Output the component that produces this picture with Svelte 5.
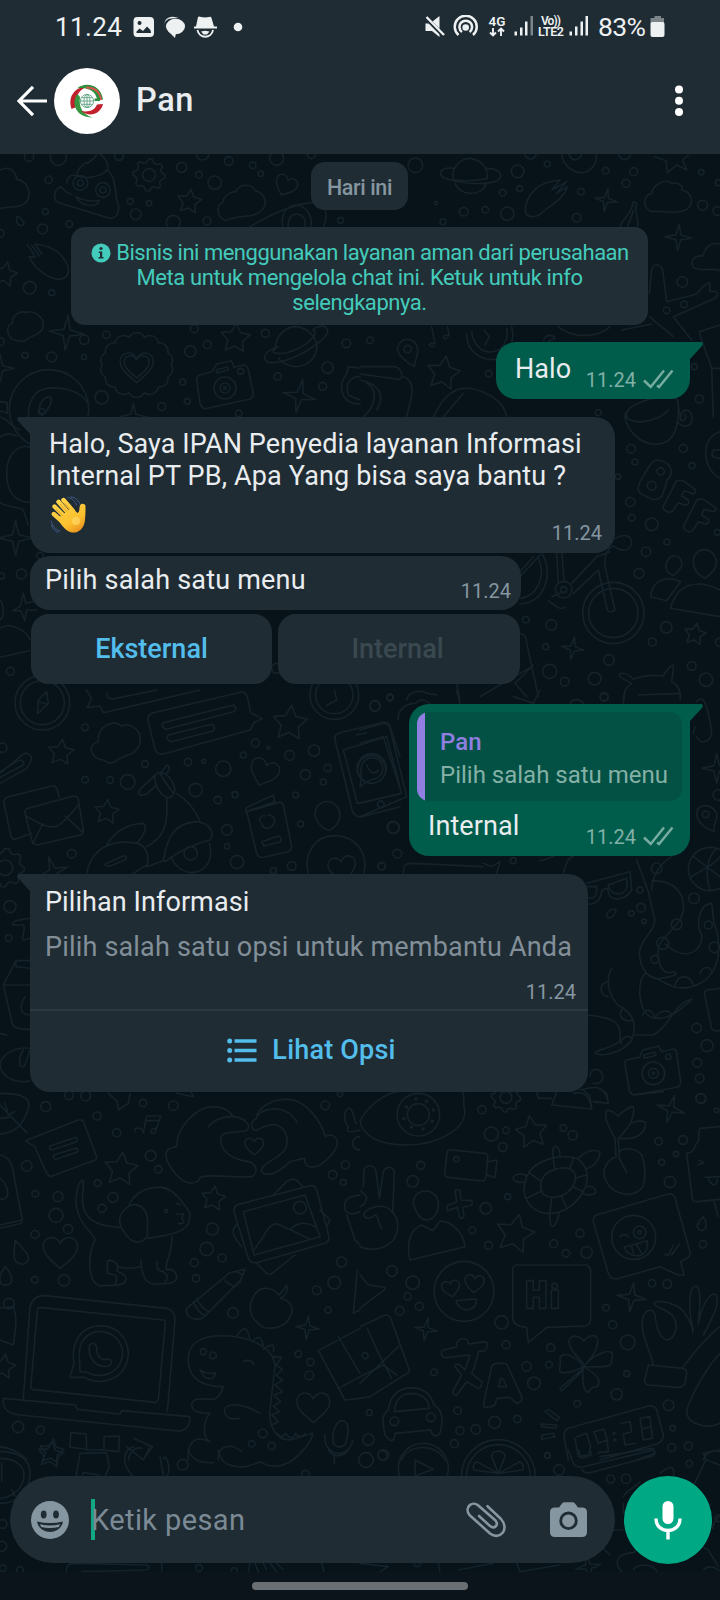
<script>
  const star = (x, y, r, a = 0) => {
    let d = '';
    for (let i = 0; i < 10; i++) {
      const q = i % 2 ? r * 0.5 : r;
      const t = ((a + i * 36 - 90) * Math.PI) / 180;
      d += (i ? 'L' : 'M') + (x + q * Math.cos(t)).toFixed(1) + ' ' + (y + q * Math.sin(t)).toFixed(1);
    }
    return d + 'Z';
  };
  const spark = (x, y, r, a = 0) => {
    let d = '';
    for (let i = 0; i <= 8; i++) {
      const q = i % 2 ? r * 0.26 : r;
      const t = ((a + i * 45 - 90) * Math.PI) / 180;
      d += (i ? 'L' : 'M') + (x + q * Math.cos(t)).toFixed(1) + ' ' + (y + q * Math.sin(t)).toFixed(1);
    }
    return d + 'Z';
  };
  const wavy = (x, y, rx, ry, n, k) => {
    let d = '';
    for (let i = 0; i <= n; i++) {
      const t = (i * 2 * Math.PI) / n;
      const px = (x + rx * Math.cos(t)).toFixed(1);
      const py = (y + ry * Math.sin(t)).toFixed(1);
      d += i ? `A${k} ${k} 0 0 1 ${px} ${py}` : `M${px} ${py}`;
    }
    return d + 'Z';
  };
  const ring = (x, y, r) => `M${x - r} ${y}a${r} ${r} 0 1 0 ${2 * r} 0a${r} ${r} 0 1 0 ${-2 * r} 0Z`;
  const heart = (x, y, s, a = 0) => {
    const c = Math.cos((a * Math.PI) / 180) * s;
    const n = Math.sin((a * Math.PI) / 180) * s;
    const p = (u, v) => `${(x + u * c - v * n).toFixed(1)} ${(y + u * n + v * c).toFixed(1)}`;
    return `M${p(0, -0.5)}C${p(0.3, -1.1)} ${p(1.2, -0.9)} ${p(1, -0.1)}C${p(0.85, 0.4)} ${p(0.3, 0.7)} ${p(0, 1)}C${p(-0.3, 0.7)} ${p(-0.85, 0.4)} ${p(-1, -0.1)}C${p(-1.2, -0.9)} ${p(-0.3, -1.1)} ${p(0, -0.5)}Z`;
  };
  const gear = (x, y, r) => {
    let d = '';
    for (let i = 0; i < 32; i++) {
      const q = i % 4 < 2 ? r : r * 0.8;
      const t = (i * Math.PI) / 16;
      d += (i ? 'L' : 'M') + (x + q * Math.cos(t)).toFixed(1) + ' ' + (y + q * Math.sin(t)).toFixed(1);
    }
    return d + 'Z' + ring(x, y, r * 0.4);
  };

  const tiles = [
    {
      x: 0, y: 150,
      dots: [[87,20,14],[175,22,24],[357,18,13],[146,89,11],[136,185,9],[208,222,10],[128,237,15],[89,413,19],[155,428,9],[391,154,9],[447,160,8],[407,193,16],[545,52,15],[597,74,10],[644,98,20],[686,33,13],[758,46,10],[782,71,8],[830,25,21],[520,217,21],[621,213,12],[608,12,18],[934,14,12],[1022,211,9],[0,250,12],[0,575,12],[75,616,9],[155,621,15],[252,621,8],[253,569,14],[319,554,11],[583,536,12],[622,584,12],[571,604,17],[796,550,12],[1039,580,13],[983,653,17],[833,679,11],[968,709,12],[548,696,9],[562,754,9],[485,770,12],[305,742,20],[716,790,10],[722,664,9]],
      paths: [
        'M0 60C20 48 48 58 50 88C80 90 96 130 82 152C65 178 30 166 0 176',
        'M182 110C160 120 155 155 182 160L325 204C350 210 365 180 350 150M182 110C190 118 200 128 212 132M200 100C200 80 215 72 232 78C228 50 270 30 262 40C275 28 292 22 290 8C310 12 328 40 322 60C345 80 345 110 350 150M232 78C255 88 300 82 322 60M228 140C240 170 290 175 298 152C270 155 245 150 228 140Z',
        ring(241,99,22), ring(309,120,22), ring(241,99,9), ring(309,120,9), gear(447,75,48),
        star(568,155,38,8), heart(857,106,32,25),
        'M680 212C650 205 645 165 668 158C672 130 700 125 708 125C720 95 760 105 765 122C800 130 802 165 785 180C760 210 715 190 680 212Z',
        'M750 230C820 190 880 160 960 155C985 180 980 210 970 230M848 230C840 180 870 165 892 165C920 170 940 200 932 230M865 230C862 205 875 192 892 192C910 195 918 210 915 230',
        'M52 198C60 205 78 215 70 225C55 232 45 215 52 198Z',
        'M82 285C92 295 100 308 105 322L88 320C100 350 140 385 175 388C205 388 212 360 200 340C180 300 140 285 105 282L125 312M95 285L118 318',
        star(15,373,38,12), spark(200,548,52,5), star(706,565,46,5), spark(0,655,42), spark(898,738,50,12), spark(400,800,40),
        'M45 570C20 565 15 525 38 520C35 495 60 480 80 488C100 478 130 500 130 525C125 560 90 555 75 572C65 575 55 574 45 570Z',
        wavy(410,645,104,85,14,26), heart(410,650,48), heart(410,648,36),
        ring(147,778,119), 'M85 810C82 730 120 710 170 714C215 716 245 735 262 755M120 790C110 765 135 735 152 742C160 755 145 775 135 790ZM0 755L22 758V790L0 782',
        'M600 675L636 665L650 642L694 632L702 652L730 645Q742 645 745 660L760 730Q760 745 748 748L615 776Q604 774 600 760L590 690Q590 678 600 675ZM648 660L682 651L685 660L651 669Z', ring(675,714,33), ring(675,714,15), ring(675,714,4),
        'M825 595C830 550 860 530 890 530C930 535 955 570 950 600C940 640 900 660 865 645C850 640 840 632 835 625M835 590C800 600 785 620 800 635C850 655 990 570 983 540C975 520 950 530 938 540C970 550 890 615 835 610C815 610 815 602 828 595',
        'M1080 655L1045 650L1040 672C1015 700 1020 750 1060 760L1080 762M1080 680C1050 680 1035 700 1045 735L1080 750'
      ]
    },
    {
      x: 360, y: 150,
      dots: [[166,46,22],[473,64,19],[428,128,10],[479,116,9],[512,10,17],[562,42,9],[737,62,10],[821,65,12],[798,100,12],[663,125,10],[311,185,13],[376,179,10],[442,191,20],[650,203,13],[249,215,9],[228,160,5],[1028,166,15],[1072,183,13],[1024,67,8],[967,396,16],[920,481,10],[972,463,10],[30,571,10],[386,671,10],[1018,747,12],[794,10,18],[1075,98,9],[1003,650,9]],
      paths: [
        'M278 75C282 40 310 25 330 25C360 28 385 50 382 85M278 75C278 85 283 95 290 90C320 95 365 90 382 85M280 55C240 50 230 75 255 85C310 105 390 105 415 90C435 70 410 55 382 55M285 100C300 140 365 140 378 102',
        'M500 195C485 160 520 105 570 95L600 90L575 120L620 95L590 130L622 110C610 150 570 165 545 188C530 205 508 200 500 195Z',
        spark(738,150,34,10), 'M605 10C610 55 650 75 680 65C705 52 712 30 708 10M625 10C640 45 665 25 665 10', 'M885 20L918 32L922 68L950 45L980 60L968 30L985 15',
        'M875 185C850 175 845 140 875 130C880 100 920 85 935 100C960 95 970 110 965 120C995 125 1005 160 980 178C950 195 910 180 875 185Z',
        'M780 230C790 200 815 195 820 155L830 160C820 190 840 205 832 230M805 230C800 220 815 210 820 180',
        spark(955,262,40,3), 'M1080 282C1050 275 1035 295 1028 318C1000 315 985 340 1005 355C1030 365 1055 352 1080 362',
        'M868 430L875 360C880 340 900 340 908 360L920 455L1010 432C1030 405 1050 395 1050 400L1048 425C1070 420 1080 430 1065 445L940 500L995 570M868 500L940 560M785 540L875 522',
        'M320 550C318 600 360 635 410 628C450 618 465 570 455 530M335 545C340 590 370 610 400 605C435 600 445 560 440 535M372 540L388 560L375 585M388 555',
        'M215 530L225 582C205 575 200 590 222 590M262 530L268 558C245 550 245 570 262 565',
        'M112 600C115 570 140 560 162 575C185 600 165 625 163 650C145 640 120 625 112 600Z', ring(143,597,11),
        star(250,670,52,10), 'M0 650L105 650C130 655 130 690 115 688L0 672M0 690C50 700 80 730 50 780M130 680C160 690 160 720 150 760L140 800M20 700C60 720 40 780 10 800',
        'M220 800C250 740 280 710 330 715C380 725 430 750 440 800M250 800L310 730M595 530C640 570 720 560 750 530',
        'M1018 545L1080 525M1018 550L1055 655L1060 800M1055 655H1080M550 570C560 550 580 555 585 565L565 575', 'M800 800C790 770 860 740 940 740C960 750 955 770 955 800'
      ]
    },
    {
      x: 0, y: 410,
      dots: [[5,498,9],[64,492,15],[31,784,12],[125,5,10],[120,437,10],[830,775,15]],
      paths: [
        'M0 80C20 70 35 70 50 78M90 112C50 100 18 140 20 195C22 250 50 275 90 278M0 278C30 295 60 290 70 300L85 345M0 20C30 30 30 50 60 60',
        spark(47,384,52,0), 'M70 550L78 580L110 572M110 600L80 600L75 632L62 602L38 602L60 590L70 550', 'M0 570C15 590 12 620 0 630', 'M0 655C30 635 80 660 90 690M0 742L88 722'
      ]
    },
    {
      x: 360, y: 410,
      dots: [[813,116,13],[825,156,9],[970,115,12],[996,167,9],[811,276,14],[815,323,10],[875,343,19],[921,396,9],[858,425,14],[837,490,15],[497,629,10],[574,645,16],[557,710,9],[569,784,21],[614,815,13],[747,750,16],[704,806,19],[919,652,17],[877,696,12],[995,768,13],[1038,809,20],[774,200,8],[715,8,9],[90,862,9],[733,862,12],[1072,367,9],[1078,697,12]],
      paths: [
        'M795 20C800 60 840 100 880 102C920 105 950 90 958 0M795 10C800 50 890 40 925 0M955 40C990 65 1005 30 990 5C970 -5 960 5 962 30C975 35 980 25 975 12',
        'M840 215L870 165Q885 145 905 152Q940 165 932 195Q930 205 920 210Q918 230 905 260Q885 275 870 265L842 250Q828 240 840 215Z', ring(902,184,11), ring(875,227,13),
        'M912 285L948 215Q955 208 968 212L1002 235Q1012 245 1000 252L972 242L965 258L985 270Q990 285 975 285L955 278L940 300Q930 312 918 303Q905 295 912 285Z',
        'M972 345L1008 275Q1015 262 1030 268L1062 290Q1075 298 1062 305L1032 298L1025 315L1045 328Q1050 342 1035 342L1015 335L1000 360Q990 370 978 362Q968 355 972 345Z',
        'M1080 65C1025 80 1020 170 1080 205M1080 120L1060 120C1050 135 1060 145 1080 145',
        ring(760,609,92), ring(760,609,74), 'M765 385C790 370 815 375 815 400C810 425 780 425 765 410C750 405 730 430 735 470L765 600Q750 612 742 600L715 480L640 550M590 430L595 520M606 430L612 515M710 440L635 520M750 425L710 440M565 572C590 590 600 600 615 592M575 560L610 545', ring(611,539,25), ring(611,539,9),
        'M545 430C580 480 560 580 480 582M535 445C560 500 530 560 480 565M480 500L540 435M480 485L520 440',
        'M918 465C925 430 955 430 965 455C970 480 945 490 940 497C925 490 915 480 918 465Z', 'M1000 450C1005 410 1060 405 1070 455C1068 490 1040 500 1033 505C1015 495 998 480 1000 450Z',
        'M872 560C875 510 920 495 962 515L920 572ZM932 595C950 520 1010 505 1080 540M932 595L1080 620', star(1005,673,34,10), spark(638,715,34,10),
        'M480 670C495 672 500 685 500 700L535 860M360 860L515 770M465 820L520 765M465 820L500 860M290 820L300 870M140 870C145 840 190 840 200 850L230 855',
        'M790 870C790 850 800 830 815 820L778 800C775 785 800 785 820 808C850 795 890 795 910 798C925 770 945 755 940 775L935 815C955 825 965 850 960 870'
      ]
    },
    {
      x: 0, y: 690,
      dots: [[255,112,10],[7,173,14],[255,269,10],[330,270,10],[383,276,22],[435,222,10],[564,216,11],[611,214,6],[730,195,9],[766,159,12],[805,173,5],[670,236,23],[587,300,20],[653,330,11],[705,314,9],[869,196,15],[942,182,17],[916,254,15],[983,234,11],[970,276,9],[887,315,9],[1125,48,15],[1170,23,10],[1180,413,17],[902,402,9],[681,420,16],[681,469,8],[711,516,20],[215,491,13],[820,542,9],[875,528,13],[1145,528,11],[30,650,18],[26,744,10],[1143,343,10]],
      paths: [
        ring(127,38,82), ring(127,38,66), 'M112 72L115 30L140 5L145 40ZM115 35L142 42', 'M258 0L275 25L262 52L300 48L310 68L600 0M320 10C320 25 330 30 350 25L470 0',
        'M445 95Q440 75 460 68L715 8Q735 2 742 20L752 68L786 86L762 98L750 120L490 192Q470 195 465 178ZM490 98L700 45Q715 55 700 65L500 118Q480 112 490 98ZM505 135L635 103Q650 110 640 122L515 155Q495 150 505 135Z',
        star(870,100,54,5), ring(1003,15,73), ring(1003,15,56), 'M1003 0L1010 30L980 46', star(183,188,40,6), star(320,366,38,5),
        'M310 210C270 205 260 165 295 155C290 110 340 85 365 108C400 95 430 130 418 165C405 200 365 195 345 215C335 222 320 218 310 210Z',
        'M0 250L60 200C80 180 100 195 92 215L80 235L0 280M0 245L50 215C65 205 75 215 70 225L0 262', heart(792,246,42,20),
        'M95 430L45 448Q35 448 32 435L12 340Q10 325 25 320L155 288Q168 285 172 300L178 322M75 370Q72 358 85 355L220 318Q232 318 235 328L250 420Q250 432 240 435L115 464Q100 465 95 450ZM78 378C110 395 140 415 165 410C185 405 215 370 235 345M98 460L128 402M246 425L195 378',
        'M465 255L420 298C410 315 425 320 440 312L470 285M465 255C480 240 515 250 525 300C520 320 510 325 500 322C480 315 460 280 465 255ZM480 250C490 270 510 295 522 312M485 245L500 225C515 230 505 245 498 253M500 325C505 400 495 440 440 470M530 310C570 335 590 370 600 395M320 465C340 430 380 400 430 400C445 410 430 440 410 460M260 550C275 470 340 450 400 458C440 460 450 500 440 530L490 512M400 550L440 525M320 520L370 497C385 500 380 508 370 512L330 528C315 530 312 525 320 520Z',
        'M490 510C500 460 510 400 590 395C630 400 645 430 630 450C590 460 540 480 495 515ZM628 460C640 500 625 545 575 548C540 545 520 520 515 505', ring(572,490,20),
        gear(15,533,58), spark(160,545,46,-18),
        'M740 370Q732 355 745 350L820 315L825 335L738 365M740 365L770 490Q775 505 790 502L865 485Q878 480 874 465L850 345Q845 335 835 338L740 365M785 455L835 438Q845 440 842 455L792 468ZM780 395C775 385 785 375 795 378M805 375C825 375 830 395 815 410C800 422 785 410 785 400',
        'M945 375C945 320 1020 320 1020 380C1018 400 1000 415 988 422C965 415 948 395 945 375Z', 'M925 550C910 490 945 435 1008 437C1070 440 1105 490 1092 550', heart(1027,535,40,-10),
        'M1005 150Q1002 132 1020 128L1150 97Q1165 95 1170 110L1200 200M1005 150L1055 355Q1060 382 1085 380L1200 350M1030 180L1160 140L1200 290M1030 180L1072 340L1200 312M1070 135L1100 128', ring(1115,235,44), 'M1080 290L1085 260C1075 225 1095 205 1115 203C1150 205 1158 240 1135 262C1115 272 1105 265 1080 290ZM1100 225C1110 250 1125 255 1135 240',
        'M90 685C60 690 35 690 38 705L70 705C80 720 60 745 70 750L90 745M90 812H48L10 885L38 1005Q45 1018 90 1018M10 885H90M48 812V830L90 835M75 920C60 945 55 975 90 975M0 1030L20 1035M90 1075C50 1070 0 1090 0 1130C10 1170 60 1180 90 1172M70 1080C50 1110 60 1145 75 1125L90 1080'
      ]
    },
    {
      x: 360, y: 690,
      dots: [[45,48,16],[90,22,10],[732,20,12],[100,412,18],[112,491,13],[65,529,11],[460,512,9],[62,343,10],[1002,625,16],[843,653,13],[814,670,8],[852,694,7],[840,600,9],[1010,1014,14],[1041,1067,18],[1012,1118,13],[1019,1165,13],[1022,1225,14],[1075,315,16]],
      paths: [
        'M0 120L70 100Q85 98 90 115L140 320L0 380M0 160L70 140L125 310L0 340', ring(35,238,42), 'M115 90C110 60 140 40 165 40C190 20 200 35 210 40M290 0L300 42M460 20L520 40L540 0M630 40C640 25 660 25 670 40M790 42L795 0M835 15L960 10',
        'M1010 35C1030 10 1040 40 1055 120C1055 160 1020 165 1010 140M1000 130L1005 110', spark(1070,235,44), 'M1010 370C1012 340 1050 340 1068 365C1080 390 1055 400 1063 425C1035 415 1010 400 1010 370Z', ring(1037,373,10),
        'M130 550C130 520 140 520 160 520L370 530M370 520L395 530L420 515L410 550M610 550C620 510 630 500 640 500M540 512C560 512 570 500 580 500',
        'M680 580L810 545L815 600C800 625 770 635 750 620L742 595L725 600C725 630 700 650 680 640M745 585L800 565C805 590 800 610 775 612C760 612 745 600 745 585ZM680 590L710 590C712 620 700 630 680 622', 'M740 680C740 660 760 655 768 660C765 680 745 690 740 680Z',
        ring(1050,537,65), 'M1000 500L1080 560M1070 475C1040 500 1035 560 1050 600M995 560C1020 540 1060 530 1080 500',
        'M830 510L865 605L880 670C900 720 840 740 838 790C840 840 870 870 900 865C945 860 960 850 940 845C900 860 885 800 900 760C920 730 980 690 970 640C965 590 920 570 875 573M935 500C900 520 875 560 875 600M1055 640C1020 640 1005 700 1025 735C1030 780 980 820 915 762M1055 640L1062 700C1080 740 1080 800 1065 830C1050 870 1000 905 940 890L855 850C830 880 835 960 870 980C920 1000 960 960 995 928C940 940 930 1010 880 1035L825 1035',
        ring(890,535,16), ring(950,703,16), ring(908,760,18), ring(885,808,12), ring(1045,705,12), ring(1063,772,16), 'M945 885C955 850 990 855 1000 885M1020 850C1030 825 1050 830 1055 845M848 975C855 950 880 960 885 985M885 985C900 955 930 960 935 975',
        'M755 835C730 880 755 940 790 955C825 980 830 1010 815 1050C790 1085 740 1100 710 1092C690 1080 770 1075 780 1050C785 1000 770 985 685 975', 'M740 875C715 885 720 920 745 920M790 955C770 970 785 1000 820 990M815 1045C800 1030 785 1045 782 1060',
        'M1080 895L1040 900Q1030 905 1035 920L1055 1015Q1060 1025 1080 1022',
        'M800 1110L838 1102L848 1080L895 1068L905 1085L935 1078Q948 1075 950 1090L962 1175Q962 1188 950 1192L825 1215Q812 1215 808 1200L795 1125Q795 1112 800 1110ZM850 1095L885 1086L888 1096L854 1105Z', ring(880,1150,34), ring(880,1150,15), ring(880,1150,4), ring(925,1100,8),
        'M690 1160C690 1130 730 1130 728 1165C725 1180 710 1182 700 1180M660 1200C700 1190 730 1180 745 1235', 'M640 1210C680 1200 690 1230 695 1255'
      ]
    },
    {
      x: 0, y: 1090,
      dots: [[137,50,15],[207,16,13],[257,18,15],[291,78,12],[350,128,12],[429,39,11],[520,47,14],[80,228,16],[452,197,16],[475,238,11],[293,279,10],[106,311,10],[174,320,15],[168,376,21],[204,417,14],[105,433,12],[339,322,15],[306,355,12],[637,417,18],[620,477,20],[666,504,12],[583,518,12],[588,565,11],[104,569,10],[192,571,17],[976,46,13],[1036,225,12],[998,254,13],[1030,277,9],[1025,516,15],[1003,578,19],[950,601,13],[984,660,9],[699,669,16],[895,792,10],[931,816,11],[928,856,13],[54,1011,17],[121,1020,12],[788,1030,13],[755,1061,10],[815,1068,11],[610,785,9],[639,796,10],[498,364,5],[1020,12,8],[27,641,16]],
      paths: [
        'M0 10C60 10 95 20 85 55C70 110 40 130 0 132M0 45L80 128M15 40L25 75L45 65M0 85L28 82',
        'M76 152L235 90Q250 88 252 100L290 200Q290 210 280 212L150 260L140 250L104 170ZM150 168L228 142Q238 150 228 156L155 180Q145 175 150 168ZM162 195L228 174Q238 180 230 187L168 208Q155 205 162 195Z',
        'M325 10L352 35L355 60L385 40L390 12M530 10L580 20L570 0', 'M405 125C400 110 425 110 430 128L440 78L482 78L465 130C450 135 445 115 468 115M438 92H478', star(363,238,52,6), star(640,326,38,8),
        'M530 170C530 110 590 50 640 50C670 50 690 65 700 80C740 85 755 110 740 122C700 130 660 120 662 150C665 190 700 205 730 212C775 215 775 250 755 260C700 265 640 250 600 262C600 275 580 282 565 278C530 270 490 210 500 185C505 170 520 175 530 168M625 110C640 90 670 78 700 80',
        'M975 135C960 90 920 40 880 30C830 20 770 50 770 85C750 95 750 120 770 120C790 110 820 95 840 110C870 130 865 175 845 190C815 215 780 225 785 245C800 265 840 245 870 215C890 210 910 205 915 205C910 235 940 235 960 225C985 210 1010 180 1012 160C1010 135 990 130 975 140M775 75C800 50 860 45 892 97', heart(763,168,27),
        'M1080 120C1050 130 1035 125 1045 110C1025 90 1035 50 1050 55C1065 65 1060 100 1070 100M1080 140C1050 140 1050 180 1080 180',
        'M0 195C30 200 38 225 42 260L67 390Q67 400 55 402L0 415M0 265C20 280 35 320 10 328L0 328M0 405L65 390',
        'M360 412C310 410 255 400 248 340C245 310 255 280 248 270C232 275 220 340 235 370C245 410 285 435 285 450C260 500 265 580 300 587C340 585 380 590 378 565C370 540 340 555 355 530C345 510 320 505 322 520L322 550L345 555C360 570 340 585 345 585M355 530C370 535 400 535 425 530M422 510C425 540 430 580 460 582C490 580 530 585 530 560C528 540 510 535 500 540C490 520 520 490 515 440M470 515C470 530 475 545 490 545C505 555 505 565 495 575',
        'M385 350C410 335 440 350 443 390L442 440C420 465 395 460 375 430C350 400 355 370 385 350ZM385 350C400 310 440 290 480 292C520 290 550 340 570 370C570 410 560 430 445 445M455 295C480 285 520 300 528 318M530 372L550 372L545 385C560 395 545 405 535 400M530 340L540 345',
        heart(181,485,50), 'M45 450C60 470 90 490 85 510C75 530 45 525 42 500ZM15 530C5 545 -5 560 2 580C15 590 35 585 35 570C35 550 25 540 15 530Z',
        'M710 345L930 287Q945 285 950 300L987 440Q988 455 975 460L770 518Q750 520 745 505L702 365Q702 350 710 345ZM730 365L915 315L960 440L762 495ZM762 480L790 440Q815 390 840 405L925 445M870 420C890 395 920 395 945 410M820 315L860 275Q880 260 895 275L908 290M960 360L990 390L980 410M710 405C690 420 700 440 725 470M770 520L800 550Q812 555 820 547L885 495', ring(900,353,19),
        'M1080 315C1040 320 1030 330 1035 360C1050 380 1070 370 1080 365M1040 375L1065 450L1080 465M1072 540L1060 670L1080 660',
        'M560 655L690 548L735 538L722 570L610 683C580 695 555 680 560 655ZM580 635C590 660 600 670 615 678M590 625C600 650 615 660 628 665M675 570C680 585 695 578 700 592C710 590 708 580 722 575M708 545L730 555',
        'M760 620C775 590 810 585 838 615L850 600L860 587C865 605 855 620 840 625C870 630 885 655 872 675C860 715 810 720 785 710C765 690 755 685 752 665C748 650 752 635 760 620Z', spark(922,713,35,6),
        'M70 925L90 650Q100 615 135 617L500 655Q525 662 525 690L502 965M118 652L490 690Q497 690 496 700L475 930Q472 938 465 937L97 898Q92 895 93 885L112 660Q112 652 118 652ZM10 925L225 945L232 958L360 972L365 962L570 980Q570 1020 535 1023L60 975Q5 970 10 925Z',
        'M210 862L222 820C215 780 225 710 302 707C360 710 385 750 385 795C375 870 305 890 252 862ZM240 845L238 800C235 755 260 725 302 724C345 728 370 760 368 795C360 850 305 870 262 847ZM268 768C262 810 295 835 325 828C345 815 330 805 320 808C305 812 295 800 290 785C295 765 275 750 268 768Z',
        'M670 890C620 890 560 875 565 800C570 740 640 735 690 738C760 745 820 775 825 825L810 960C805 1010 830 1050 870 1050L938 1030C935 1060 900 1090 880 1110M670 890C665 910 650 930 635 928C600 925 575 925 575 945C580 970 600 968 630 970C605 1000 610 1045 630 1055M710 738C730 710 740 705 750 748M755 755C775 735 785 740 790 768M790 778C815 760 825 760 820 785M820 800L845 802L828 825L848 838L828 855L848 870L825 885L848 905L822 915L842 935L820 948L838 965L815 975L835 995L815 1005M600 840C620 855 640 850 645 848C648 865 630 870 615 862ZM730 815C740 808 755 810 762 825M780 970C740 945 690 935 675 955C670 985 695 990 720 985M565 1110C560 1040 600 1040 630 1055M655 1110C650 1070 690 1055 725 1085M830 1030C840 1040 850 1045 855 1030C870 1045 880 1050 885 1030C900 1045 910 1040 915 1030',
        heart(940,950,48), 'M955 782L1080 715M955 782L1035 930L1080 925M1015 740L1080 850M1015 895L1080 860', 'M1000 1060C995 1020 1010 990 1030 992C1050 1000 1045 1035 1035 1065C1020 1075 1005 1070 1000 1060ZM975 1035C970 1075 1000 1090 1015 1090C1040 1090 1055 1070 1058 1050',
        'M0 655L40 650C55 690 45 720 40 765L0 750', star(10,830,38,10), star(155,1085,38,8), 'M212 1028L258 1032L260 1078L210 1072ZM312 1040L358 1038L356 1085L312 1080ZM258 1080H312', 'M400 1045L458 1070L435 1100M385 1110C390 1080 410 1070 425 1075M0 1070C40 1075 70 1095 80 1110'
      ]
    },
    {
      x: 360, y: 1090,
      dots: [[366,59,12],[394,132,21],[438,121,10],[428,171,13],[182,226,12],[158,274,17],[443,320,9],[377,355,17],[337,421,10],[386,466,12],[610,114,10],[638,136,14],[896,154,11],[969,150,13],[948,192,8],[905,217,9],[930,276,17],[1023,26,15],[660,430,12],[581,461,12],[618,490,11],[680,487,17],[96,543,16],[158,578,20],[143,619,11],[178,649,12],[119,662,13],[425,697,20],[438,764,12],[500,829,14],[522,880,19],[572,773,12],[567,824,10],[738,653,10],[758,704,12],[803,757,22],[800,851,9],[770,913,17],[876,580,11],[922,582,13],[1029,463,11],[222,847,10],[28,968,9],[293,962,11],[404,997,18],[472,987,11],[300,1022,12],[347,1018,14],[283,1061,12],[25,1049,17],[67,1096,14],[652,941,10],[926,946,16],[938,1015,8],[935,1073,12],[985,1068,12],[562,1097,8],[1070,61,7],[289,208,8],[15,797,9]],
      paths: [
        'M0 95C20 45 80 10 110 5M0 95C10 140 60 165 140 165C240 165 330 110 312 50L310 5', ring(175,74,64), ring(175,74,33), ring(139,51,3), ring(168,27,3), ring(200,34,3), ring(220,60,3), ring(217,94,3), ring(190,117,3), ring(154,112,3), ring(132,86,3),
        gear(438,22,44), 'M575 45L695 57L690 20L670 0M575 45L590 5M530 5L535 25H575M700 35L745 40L740 10L725 0M808 5L820 14L910 5', star(515,127,50,-8), spark(932,57,42,16), star(465,432,60,12),
        'M262 185Q262 178 275 180L375 190Q385 192 383 205L378 262Q375 273 365 273L265 262Q252 260 254 248ZM384 215L411 210L405 263L380 255',
        'M580 205L578 178C585 160 600 170 600 200M500 260C520 210 600 190 650 205C690 230 690 280 660 320C610 385 540 380 510 345C485 315 490 290 500 260ZM545 270C555 240 610 225 635 240C660 260 640 300 610 315C570 330 530 320 545 270ZM510 250L545 275M580 210L585 240M640 205L630 235M680 255L645 265M670 305L640 290M620 355L605 320M570 370L575 325M500 325L540 305M500 258C480 245 455 255 460 268C480 285 490 275 498 275M655 205C680 180 715 175 720 190C715 220 690 235 680 235M680 290C700 285 712 300 705 310C690 318 670 312 665 310M568 370L572 405C580 415 590 405 598 368',
        'M765 145C745 110 730 80 740 60C755 60 770 75 775 78C785 65 810 50 820 50C825 80 810 110 780 140M815 100C830 90 850 90 857 100C855 130 830 150 780 145M765 145L768 200C740 210 725 240 735 265C750 310 810 330 845 295C860 270 855 220 845 195C830 175 790 170 780 185M775 145L778 205L800 248',
        'M1080 110L1020 115C1010 130 1025 150 1010 160C1000 170 1010 185 980 190L998 330Q1000 335 1010 335L1080 328M1062 335L1075 380M1015 210L1032 218L1015 225M1035 262L1080 260M1045 265C1055 290 1070 290 1072 268',
        'M10 290L12 240C20 220 45 225 48 245L58 325L70 245C80 225 102 230 103 250L98 370M0 300L20 320C18 345 0 350 0 350M10 375C20 350 60 345 80 352C120 375 120 420 100 450C70 485 20 480 0 470M10 375C20 390 35 385 45 375C55 375 50 390 65 415',
        'M160 340C160 290 235 290 235 345C235 375 215 390 200 390C180 390 165 365 160 340ZM185 405L218 422L240 393C280 395 310 430 315 470L150 510Q142 480 148 450C155 425 170 410 185 405Z', 'M285 300L300 300L303 330L335 332Q340 342 332 347L308 352L312 380Q302 390 298 380L292 352L262 362Q258 350 265 345L290 335Z',
        'M710 375L925 312Q940 308 945 325L990 485Q992 500 980 505L962 515L972 555L955 555L900 530L770 567Q752 568 745 550L700 395Q698 380 710 375Z', ring(821,442,66), 'M780 440C785 432 800 432 805 440M792 472L862 452C865 475 855 495 835 497C815 498 800 490 792 472ZM815 470L820 490M830 465L845 490M915 492L925 497L940 465M935 495L958 462', ring(839,427,19), ring(839,427,5), 'M1012 405C1020 390 1030 380 1030 380C1040 395 1045 415 1025 422C1015 420 1010 412 1012 405Z',
        ring(312,604,90), heart(273,595,26,-10), heart(343,580,28,6), 'M288 632C310 632 335 625 350 628C350 650 335 660 318 660C300 655 290 645 288 632Z', 'M470 525H680Q692 530 692 545V690Q690 705 675 708L560 712L505 758L500 712Q462 710 458 685V540Q458 528 470 525Z', 'M500 572H520V600H538V572H558V655H538V622H520V655H500ZM574 600H595V655H574Z', ring(584,588,8),
        'M0 555L25 585L75 592Q78 600 65 605L0 655', 'M0 710L75 675Q88 675 92 685L148 840Q145 850 138 852L30 920L0 925M0 880L120 765M70 825L110 855M22 715L60 800L95 865M0 860L70 825', spark(198,718,34,10), spark(815,622,44,8),
        'M245 782L290 770C285 745 325 735 325 762L378 755Q388 765 375 782L355 785C350 810 345 830 335 850L365 875Q368 890 355 895L320 875L290 915Q278 915 278 905L305 855L285 830Q285 818 300 825L315 840L330 795L255 803Q240 800 245 782Z',
        'M372 935L395 830Q400 820 415 820L435 820Q440 820 443 828L485 920Q488 938 470 940L450 922L410 925L405 945Q390 955 372 950ZM415 890L422 865Q430 862 440 890Z',
        'M670 820C640 790 620 760 630 745C645 730 665 745 672 752C685 735 710 730 713 750C715 780 690 810 670 830M670 830C650 800 605 780 600 805C605 825 595 835 600 845C620 855 650 840 670 830M670 830C700 795 745 775 757 790C760 805 750 810 755 820C750 835 700 830 670 830M670 830C665 870 670 905 685 907C695 895 695 890 705 892C725 885 725 860 670 830M670 835L600 895L605 903L670 840',
        'M880 825C870 780 840 730 848 690C850 660 880 650 885 675C890 720 900 745 920 750C950 745 955 700 940 680C920 655 880 650 880 640C900 625 960 645 975 670C995 700 1000 715 998 730M1000 720C985 670 985 590 1008 588C1025 595 1020 650 1015 700M1015 700C1025 650 1045 610 1065 612C1085 630 1060 680 1030 735M970 830C1000 790 1040 740 1080 710M865 825L970 835Q982 840 980 850L975 880Q970 892 955 892L865 885Q850 880 855 865ZM1080 790C1050 820 1000 900 980 960C975 1000 1040 1020 1080 1000',
        'M75 1035C70 1000 60 980 85 960C90 920 110 895 155 893C200 895 215 920 222 945C250 960 250 990 240 1030C225 1045 215 1035 212 1020L105 1030C105 1055 90 1058 80 1040ZM103 965C105 935 120 910 155 910C185 912 205 925 208 955Z', ring(103,994,13), ring(212,982,13),
        'M555 965L565 958L598 982L590 992ZM543 1002L590 1005L588 1015L545 1010ZM545 1035L580 1030L585 1040L545 1048Z',
        'M625 1110L612 1040Q612 1020 625 1015L865 948Q885 945 890 960L910 1035Q910 1055 890 1062L720 1110M720 1100L880 1075L885 1090L830 1110', 'M650 1040L680 1030L690 1065M645 1045L655 1100L685 1095L692 1070M702 1025L732 1018L742 1050L715 1060L702 1025M742 1050L745 1085L715 1088M783 1000L810 995L815 1025L790 1032L795 1065L825 1060M840 985L870 980L873 1010L845 1017ZM845 1017L850 1050L878 1045L873 1010', ring(762,1030,3), ring(765,1050,3),
        'M1030 1110C1040 1080 1070 1080 1080 1085M125 1110C145 1060 230 1060 255 1110'
      ]
    },
    {
      x: 0, y: 1450,
      dots: [[548,44,16],[8,222,13],[5,289,15],[8,355,10],[60,360,10],[597,354,10],[916,72,11],[703,362,9]],
      paths: [
        'M0 5C60 5 90 30 90 70C90 130 50 160 0 160M0 25C50 25 72 50 72 75C70 115 40 140 0 145M35 118L45 140M5 40V95', star(152,15,40,8), 'M240 10L320 8L328 50L315 80M240 10L228 80M245 80L250 68L300 75', 'M400 80C360 40 370 0 400 -10M380 -10L430 30L450 -10M490 25C500 10 515 60 500 80M480 20L490 75',
        'M655 0C660 50 720 65 780 35C820 60 870 50 910 0M565 0C575 30 600 40 640 38M985 0C1000 25 1030 20 1045 0M1003 18V40', 'M200 365C195 345 210 340 230 340L440 345Q455 355 440 360L245 365M485 338V365M745 365L750 340M765 340L775 365M790 340L800 360M810 340L830 365M830 340L850 360M965 340L972 365'
      ]
    },
    {
      x: 360, y: 1450,
      dots: [[18,30,22],[70,15,16],[562,16,9],[597,60,16],[752,87,12],[798,86,14],[988,41,10],[172,340,10],[1075,205,10]],
      paths: [
        ring(190,55,75), 'M165 30L220 58L165 78Z', ring(415,80,111), ring(415,80,96), 'M415 70L395 20Q395 5 415 3Q435 5 435 20ZM415 70L350 35Q335 45 342 60ZM415 70L480 35Q495 45 488 60Z', 'M625 0L640 40Q650 55 670 50L880 0Q890 10 878 18L690 68Q670 70 665 58M655 0L665 25L695 15L690 0', 'M1080 0L1030 10L1040 30L1080 45M1038 28L990 130M900 70C930 45 945 45 940 80M790 140C800 120 830 110 840 95M1050 165C1025 180 1035 225 1060 235C1055 220 1070 210 1080 195M760 240H790M790 160V190',
        spark(685,350,38,-10), 'M0 340L85 350L60 365M235 340L240 365M295 360L400 340M470 340L480 365L600 345M730 295L750 315M785 365C755 330 780 310 820 308C850 280 880 280 900 330M820 360C830 340 880 340 890 365M1010 280L1045 300L1075 350M1030 360C1045 345 1060 350 1080 362'
      ]
    }
  ];
</script>

{#snippet ticks()}
  <svg class="ticks" width="31" height="22" viewBox="0 0 31 22" fill="none" stroke="#77aca1" stroke-width="2.5">
    <path d="M1 12.5 7.7 19 21 2.5M14 17.5 16 19 29.5 2.5" />
  </svg>
{/snippet}

<div class="phone">
  <svg class="wallpaper" width="720" height="1418" viewBox="0 154 720 1418" aria-hidden="true">
    {#each tiles as t}
      <g transform="translate({t.x} {t.y}) scale(.33333)">
        {#each t.paths as d}<path {d} />{/each}
        {#each t.dots as c}<circle cx={c[0]} cy={c[1]} r={c[2]} />{/each}
      </g>
    {/each}
  </svg>

  <header>
    <div class="status">
      <span class="clock">11.24</span>
      <svg class="notif" width="116" height="24" viewBox="0 0 116 24" fill="#eef1f2">
        <path fill-rule="evenodd" d="M4 1H17Q21 1 21 5V17Q21 21 17 21H4Q0.500 21 .5 17V5Q.5 1 4 1ZM3.500 17H18L17.500 14 14 10.500 10 15 6.500 12.500 3.500 15.500ZM6.500 5a2 2 0 1 0 .1 0Z" />
        <path d="M32.500 12C30 7 33 3 38 2.500L46 2 40 .8C33 .7 30 6 32.500 12Z" />
        <ellipse cx="42.500" cy="10.500" rx="9.500" ry="7.800" /><path d="M35 15 42 22 43 17Z" />
        <path d="M65 1Q66 0 68 1L72 1.500 76 1Q78 0 78.500 2L81 10.500H84V12.500H61V10.500H63Z" />
        <path d="M64.500 14C66 23 78.500 23 80 14" fill="none" stroke="#eef1f2" stroke-width="1.800" /><path d="M68 15.500 72 14.800 76.500 15.500 74 18.500H70.500Z" />
        <circle cx="105" cy="11" r="4.300" />
      </svg>
      <svg class="signals" width="168" height="24" viewBox="0 0 168 24" fill="#eef1f2">
        <path d="M1.500 8.500H6L15.500 1V22L8 16H1.500Z" />
        <path d="M1 2 20 21" stroke="#1f2c34" stroke-width="4" /><path d="M2.500 2 20 20" stroke="#eef1f2" stroke-width="2.400" />
        <g fill="none" stroke="#eef1f2" stroke-width="2.500"><path d="M34.500 20A11 11 0 1 1 49 20M38 17A6.300 6.300 0 1 1 45.500 17" /></g><circle cx="41.700" cy="12.500" r="3.300" />
        <path d="M69 13V20M66 17.500 69 20.500 72 17.500M77 21V14M74 16.500 77 13.500 80 16.500" fill="none" stroke="#eef1f2" stroke-width="1.900" />
        <path d="M90.500 16.500h2.500v4h-2.500zM96 12.500h2.500v8H96zM101 6.500h2.500v14H101z" /><path d="M106.500 1h2.500v19.500h-2.500z" opacity=".45" />
        <path d="M145.500 16.500h2.500v4h-2.500zM151 11.500h2.500v9H151zM156.500 6.500h2.500v14h-2.500zM161.500 1h2.500v19.500h-2.500z" />
        <text x="64.500" y="10.500" font-size="13.500" font-weight="600" textLength="17">4G</text>
        <text x="117" y="9.800" font-size="12" font-weight="600" textLength="20">Vo))</text>
        <text x="114" y="21" font-size="12.500" font-weight="600" textLength="26">LTE2</text>
      </svg>
      <span class="pct">83%</span>
      <svg width="15" height="22" viewBox="0 0 15 22"><path d="M4.500 0H11V2H14V8H.5V2H4.500Z" fill="#7b8489" /><rect x=".5" y="6" width="14" height="15" rx="2" fill="#eef1f2" /></svg>
    </div>
    <div class="bar">
      <svg class="back" width="31" height="32" viewBox="0 0 31 32" fill="none" stroke="#fff" stroke-width="3.200"><path d="M30 16H2M16 1.800 2 16 16 30.200" /></svg>
      <div class="avatar">
        <svg width="34" height="36" viewBox="0 0 34 36" fill="none">
          <path d="M1.500 26C-3 13 6 3.500 17 3.500C9 7 5 13 6.500 24Z" fill="#c1202d" />
          <path d="M7 5.500C16 -2 31 2 33 16.500L27 17.500C27 9 18 3.500 7 5.500Z" fill="#2b8f3c" />
          <path d="M16 4.500C25 4.500 30 9.500 31 17" stroke="#d5544b" stroke-width="1.800" />
          <path d="M24.500 15.500H30V18H24.500Z" fill="#2b8f3c" />
          <path d="M7.500 11C1 19 5 34.500 22.500 34.500C13 31.500 8.500 25 10 14Z" fill="#35963f" />
          <path d="M11 28C19 34.500 30.500 31.500 33 21L27 21.500C25 27 19 29.500 11 28Z" fill="#c1202d" />
          <g stroke="#5da384" stroke-width=".9"><circle cx="17" cy="18" r="6.600" /><ellipse cx="17" cy="18" rx="3" ry="6.600" /><path d="M10.500 18H23.500M17 11.500V24.500M11.500 14.700H22.500M11.500 21.300H22.500" /></g>
        </svg>
      </div>
      <h1>Pan</h1>
      <svg class="more" width="8" height="32" viewBox="0 0 8 32" fill="#fff"><circle cx="4" cy="4.500" r="4" /><circle cx="4" cy="15.800" r="4" /><circle cx="4" cy="27" r="4" /></svg>
    </div>
  </header>

  <main>
    <div class="date">Hari ini</div>
    <div class="notice">
      <svg width="20" height="20" viewBox="0 0 20 20"><circle cx="10" cy="10" r="9.500" fill="#43cbbb" /><circle cx="10" cy="5.500" r="1.600" fill="#222e35" /><path d="M7.800 8.500H11.200V14H12.500V15.500H7.500V14H9V10H7.800Z" fill="#222e35" /></svg>
      <span class="tight">Bisnis ini menggunakan layanan aman dari perusahaan</span><br />
      <span class="loose">Meta untuk mengelola chat ini. Ketuk untuk info</span><br />
      <span>selengkapnya.</span>
    </div>

    <div class="msg out first">
      <p>Halo</p>
      <time>11.24</time>{@render ticks()}
      <svg class="tail" width="18" height="22" viewBox="0 0 18 22"><path d="M0 0H16.500Q19 1 17 4L5 17V22H0Z" fill="#005c4b" /></svg>
    </div>

    <div class="msg in hello">
      <svg class="tail left" width="18" height="22" viewBox="0 0 18 22"><path d="M18 0H1.500Q-1 1 1 4L13 17V22H18Z" fill="#1f2c34" /></svg>
      <p>Halo, Saya IPAN Penyedia layanan Informasi<br /><span class="wide">Internal PT PB, Apa Yang bisa saya bantu ?</span>
        <svg class="wave" width="37" height="38" viewBox="0 0 37 38">
          <defs><linearGradient id="skin" gradientUnits="userSpaceOnUse" x1="6" y1="4" x2="28" y2="36"><stop offset="0" stop-color="#ffd64e" /><stop offset=".7" stop-color="#fbc02d" /><stop offset="1" stop-color="#eb9422" /></linearGradient></defs>
          <g fill="none" stroke="#445f94" stroke-width=".9" stroke-linecap="round"><path d="M18 1.500C22 2 25.500 5.500 26.500 9M21 .8C26 1.500 29 5 30 8.500M1 25C2 30 6 34 10 35M1.500 29.500C3 33 5 35 8 36.500" /></g>
          <g stroke="url(#skin)" stroke-width="4.400" stroke-linecap="round"><path d="M13.500 4 23 15M8.500 5.800 20 19M4.500 10.500 17 23M3.800 18 15 28" /></g>
          <path d="M8 22 22 12 27.500 17C30 16 29 12 30 9.500C31 7 35 7 35.500 10C35.500 16 35.500 22 34.500 27C32.500 35 25 39 18 35C14 32.500 10 28 8 22Z" fill="url(#skin)" />
          <path d="M10 8 17 16M6 13 13 20M14.500 7 20 13" stroke="#e79b25" stroke-width=".8" /><circle cx="26" cy="25" r="4" fill="#ffd968" opacity=".7" />
        </svg>
      </p>
      <time>11.24</time>
    </div>
    <div class="msg in ask"><p>Pilih salah satu menu</p><time>11.24</time></div>
    <div class="choices">
      <button>Eksternal</button>
      <button class="off">Internal</button>
    </div>

    <div class="msg out reply">
      <div class="quote"><b>Pan</b><span>Pilih salah satu menu</span></div>
      <div class="line"><p>Internal</p><time>11.24</time>{@render ticks()}</div>
      <svg class="tail" width="18" height="22" viewBox="0 0 18 22"><path d="M0 0H16.500Q19 1 17 4L5 17V22H0Z" fill="#005c4b" /></svg>
    </div>

    <div class="msg in list">
      <svg class="tail left" width="18" height="22" viewBox="0 0 18 22"><path d="M18 0H1.500Q-1 1 1 4L13 17V22H18Z" fill="#1f2c34" /></svg>
      <div class="body">
        <p>Pilihan Informasi</p>
        <p class="sub">Pilih salah satu opsi untuk membantu Anda</p>
        <time>11.24</time>
      </div>
      <div class="action">
        <svg width="30" height="25" viewBox="0 0 30 25" fill="#53bdeb"><circle cx="2.700" cy="3" r="2.500" /><circle cx="2.700" cy="12.500" r="2.500" /><circle cx="2.700" cy="22" r="2.500" /><path d="M7.500 1.300H29.500v3.400H7.500zM7.500 10.800H29.500v3.400H7.500zM7.500 20.300H29.500v3.400H7.500z" /></svg>
        <span>Lihat Opsi</span>
      </div>
    </div>
  </main>

  <footer>
    <div class="composer">
      <div class="input">
        <svg width="38" height="38" viewBox="0 0 38 38"><circle cx="19" cy="19" r="19" fill="#8696a0" /><g fill="#1f2c34"><ellipse cx="12.700" cy="13.500" rx="2.900" ry="3.900" /><ellipse cx="25" cy="13.500" rx="2.900" ry="3.900" /><path d="M6 20.500Q19 23.500 32 20.500C29.500 34.500 8.500 34.500 6 20.500Z" /></g><path d="M9 23.300Q19 25.800 29 23.300L27.800 26Q19 28.200 10.200 26Z" fill="#8696a0" /></svg>
        <i class="caret"></i>
        <span>Ketik pesan</span>
        <svg class="clip" width="40" height="36" viewBox="0 0 40 36" fill="none" stroke="#8696a0" stroke-width="2.600" stroke-linecap="round"><path d="M21.500 4.200 35 17C44 27 34 39 24 31.500L3.500 13C-2.500 5 7 -2.500 13.500 4.500L29.500 18.500C33 23 28.500 27.500 24 24L13 14" /></svg>
        <svg class="cam" width="37" height="35" viewBox="0 0 37 35"><path d="M5 5.500H9L12 1.500Q13 .3 14.500 .3H22.500Q24 .3 25 1.500L28 5.500H32Q37 5.500 37 10V30Q37 35 32 35H5Q0 35 0 30V10Q0 5.500 5 5.500Z" fill="#8696a0" /><circle cx="18.500" cy="18.800" r="7.800" fill="#8696a0" stroke="#1f2c34" stroke-width="2.800" /></svg>
      </div>
      <button class="mic" aria-label="Mic">
        <svg width="28" height="39" viewBox="0 0 28 39"><rect x="8.500" y="0" width="11" height="23" rx="5.500" fill="#fff" /><path d="M2 17.500C2 33.500 26 33.500 26 17.500M14 29V38.500" fill="none" stroke="#fff" stroke-width="3.400" /></svg>
      </button>
    </div>
    <div class="nav"><i></i></div>
  </footer>
</div>

<style>
  :global(body) { background: #071318; }
  * { box-sizing: border-box; }
  .phone { position: relative; width: 720px; height: 1600px; overflow: hidden; display: flex; flex-direction: column; background: #071318; font-family: Roboto, "Liberation Sans", sans-serif; color: #e9edef; }
  .wallpaper { position: absolute; left: 0; top: 154px; fill: none; stroke: #15222a; stroke-width: 4.8; stroke-linejoin: round; stroke-linecap: round; }
  svg { display: block; flex: none; }
  p, h1 { margin: 0; font-weight: 400; }
  button { border: 0; padding: 0; font: inherit; }
  header { position: relative; height: 154px; background: #1f2c34; }
  .status { height: 54px; display: flex; align-items: center; padding-left: 55px; font-size: 26px; line-height: 54px; color: #eef1f2; }
  .clock { width: 78px; letter-spacing: .4px; }
  .notif { margin-top: 1px; }
  .signals { margin-left: 175px; }
  .pct { margin-left: 6px; width: 52px; letter-spacing: -.6px; font-size: 26.500px; }
  .bar { display: flex; align-items: center; padding: 12px 37px 0 17px; height: 81px; }
  .avatar { width: 66px; height: 66px; border-radius: 50%; background: #fff; display: grid; place-items: center; margin-left: 6px; }
  h1 { margin: -2px 0 0 16px; font-size: 32.500px; font-weight: 500; letter-spacing: .6px; line-height: 40px; color: #e9edef; flex: 1; }
  main { position: relative; flex: 1; display: flex; flex-direction: column; align-items: flex-start; padding: 8px 30px 0; }
  .date { align-self: center; width: 97px; height: 48px; margin-left: -1px; border-radius: 14px; background: #1f2c34; color: #8696a0; font-size: 21.500px; line-height: 51px; text-align: center; font-weight: 500; letter-spacing: -.4px; }
  .notice { align-self: center; margin: 17px 0 0 -1px; width: 577px; height: 98px; padding-top: 13px; border-radius: 14px; background: #222e35; color: #43cbbb; text-align: center; font-size: 22px; line-height: 25px; letter-spacing: -.45px; white-space: nowrap; }
  .notice svg { display: inline-block; vertical-align: -3px; margin-left: 1px; }
  .tight { letter-spacing: -.49px; }
  .loose { letter-spacing: -.4px; }
  .msg { position: relative; border-radius: 20px; font-size: 27px; line-height: 32px; letter-spacing: .08px; display: flex; white-space: nowrap; }
  .in { background: #1f2c34; border-radius: 20px; }
  .out { background: #005c4b; align-self: flex-end; border-top-right-radius: 0; }
  .tail { position: absolute; top: 0; right: -13px; }
  .tail.left { right: auto; left: -13px; }
  time { font-size: 20px; line-height: 24px; letter-spacing: 0; color: #8696a0; margin-left: auto; align-self: flex-end; }
  .out time { color: #80b0a6; }
  .ticks { align-self: flex-end; margin: 0 16px 2px 7px; }
  .first { width: 194px; height: 57px; margin-top: 17px; padding: 11px 0 7px 19px; }
  .hello { width: 585px; height: 136px; margin-top: 18px; padding: 11px 15px 8px 19px; border-top-left-radius: 0; }
  .hello p { width: 540px; margin-right: -30px; }
  .wide { letter-spacing: .15px; }
  .wave { margin-top: 4px; margin-left: 1px; }
  .ask { width: 491px; height: 54px; margin-top: 3px; padding: 8px 10px 7px 15px; letter-spacing: .2px; }
  .choices { display: grid; grid-template-columns: 241px 242px; gap: 6px; margin: 4px 0 0 1px; }
  .choices button { height: 70px; border-radius: 18px; background: #1f2c34; color: #53bdeb; font-size: 27px; font-weight: 500; text-align: center; }
  .choices .off { color: #3a4850; padding-right: 3px; }
  .reply { flex-direction: column; width: 281px; height: 152px; margin-top: 20px; padding: 8px 0 7px; }
  .quote { width: 265px; height: 89px; margin-left: 8px; padding: 14px 0 0 15px; border-radius: 12px; background: linear-gradient(90deg, #8f7fe0 8px, #025144 8px); padding-left: 23px; display: flex; flex-direction: column; font-size: 24px; line-height: 33px; letter-spacing: 0; color: #84b0a6; }
  .quote b { color: #8f7fe0; font-weight: 500; font-size: 24px; }
  .line { display: flex; flex: 1; padding: 9px 0 0 19px; }
  .list { flex-direction: column; width: 558px; height: 218px; margin-top: 18px; border-top-left-radius: 0; }
  .body { display: flex; flex-direction: column; height: 137px; padding: 12px 12px 5px 15px; border-bottom: 2px solid #2d3942; }
  .sub { color: #828f98; margin-top: 13px; letter-spacing: .18px; }
  .body time { margin-top: auto; }
  .action { flex: 1; display: flex; align-items: center; justify-content: center; gap: 15px; padding: 0 0 3px 5px; color: #53bdeb; font-weight: 500; letter-spacing: .2px; }
  footer { position: relative; }
  .composer { display: flex; gap: 9px; padding: 0 8px 8px 10px; align-items: flex-start; }
  .input { width: 605px; height: 87px; border-radius: 44px; background: #1f2c34; display: flex; align-items: center; padding: 0 28px 0 21px; color: #7b8a94; font-size: 29px; letter-spacing: .4px; }
  .caret { width: 4px; height: 41px; margin-left: 22px; background: #12a884; }
  .input span { margin-left: -4px; flex: 1; }
  .clip { margin-right: 44px; }
  .mic { width: 88px; height: 88px; border-radius: 50%; background: #00a884; display: grid; place-items: center; }
  .nav { height: 28px; background: #0b141b; display: flex; justify-content: center; padding-top: 10px; }
  .nav i { width: 216px; height: 8px; border-radius: 4px; background: #6a6f74; }
</style>
